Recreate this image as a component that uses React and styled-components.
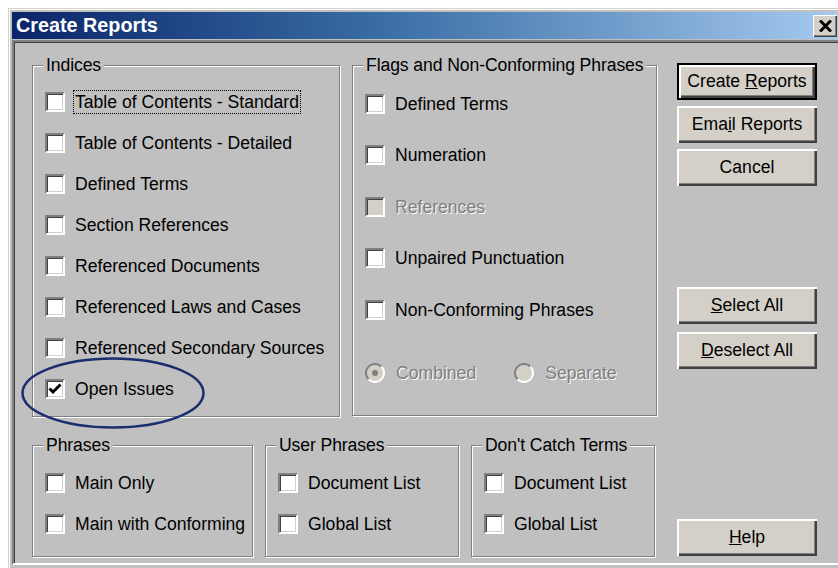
import styled, { createGlobalStyle } from 'styled-components'

const GlobalStyle = createGlobalStyle`
  html, body {
    margin: 0;
    padding: 0;
    background: #fff;
    overflow: hidden;
  }
  body {
    font-family: "Liberation Sans", Arial, sans-serif;
    color: #000;
  }
`

const Page = styled.div`
  position: relative;
  width: 838px;
  height: 568px;
  overflow: hidden;
`

const Frame = styled.div`
  margin: 8px 0 0 8px;
  width: 840px;
  height: 570px;
  box-sizing: border-box;
  background: #c0c0c0;
  border-top: 1px solid #d4d0c8;
  border-left: 1px solid #d4d0c8;
  box-shadow: inset 1px 1px 0 #fff;
  padding: 3px 0 0 3px;
`

const TitleBar = styled.div`
  width: 827px;
  height: 27px;
  box-sizing: border-box;
  padding: 0 2px 0 4px;
  display: flex;
  align-items: center;
  justify-content: space-between;
  background: linear-gradient(to right, #0a246a 0%, #3a6ea5 45%, #a6caf0 100%);
  color: #fff;
  font-weight: bold;
  font-size: 19.8px;
`

const CloseButton = styled.div`
  width: 24px;
  height: 22px;
  box-sizing: border-box;
  background: #d4d0c8;
  box-shadow: inset 1px 1px 0 #fff, inset -1px -1px 0 #404040, inset -2px -2px 0 #808080;
  display: flex;
  align-items: center;
  justify-content: center;
`

const Client = styled.div`
  margin-top: 1px;
  height: 525px;
  box-sizing: border-box;
  border-top: 2px solid #808080;
  border-left: 2px solid #808080;
  border-bottom: 2px solid #fff;
  box-shadow: inset 1px 1px 0 #404040;
  padding: 13px 0 0 18px;
  display: flex;
`

const LeftPane = styled.div`
  width: 625px;
  display: flex;
  flex-direction: column;
  gap: 18px;
`

const Row = styled.div`
  display: flex;
  gap: 12px;
`

const Group = styled.fieldset`
  margin: 0;
  min-width: 0;
  width: ${p => p.$width}px;
  height: ${p => p.$height}px;
  box-sizing: border-box;
  padding: ${p => p.$padTop}px 10px 0;
  border: 1px solid #808080;
  box-shadow: inset 1px 1px 0 #fff, 1px 1px 0 #fff;
`

const Legend = styled.legend`
  padding: 0 3px;
  font-size: 17.6px;
  line-height: 20px;
  letter-spacing: -0.1px;
  white-space: nowrap;
  background: #c0c0c0;
`

const Option = styled.div`
  display: flex;
  align-items: center;
  gap: 10px;
  height: ${p => p.$pitch}px;
  padding-left: 2px;
`

const Box = styled.span`
  flex: none;
  width: 20px;
  height: 20px;
  box-sizing: border-box;
  background: ${p => (p.$disabled ? '#d4d0c8' : '#fff')};
  border-top: 2px solid #808080;
  border-left: 2px solid #808080;
  border-right: 2px solid #fff;
  border-bottom: 2px solid #fff;
  box-shadow: inset 1px 1px 0 #404040, inset -1px -1px 0 #d4d0c8;
  display: flex;
  align-items: center;
  justify-content: center;
`

const Label = styled.span`
  font-size: 17.6px;
  line-height: 20px;
  white-space: nowrap;
  color: ${p => (p.$disabled ? '#808080' : '#000')};
  text-shadow: ${p => (p.$disabled ? '1px 1px 0 #fff' : 'none')};
  outline: ${p => (p.$focused ? '1px dotted #000' : 'none')};
  outline-offset: 1px;
`

const RadioRow = styled.div`
  display: flex;
  align-items: center;
  gap: 38px;
  margin-top: ${p => p.$offset}px;
  padding-left: 2px;
`

const RadioItem = styled.div`
  display: flex;
  align-items: center;
  gap: 11px;
`

const ButtonColumn = styled.div`
  margin-left: 20px;
  padding-top: 8px;
  width: 140px;
  display: flex;
  flex-direction: column;
`

const ButtonGroup = styled.div`
  display: flex;
  flex-direction: column;
  gap: ${p => p.$gap}px;
  margin-top: ${p => p.$offset}px;
`

const Button = styled.div`
  width: 140px;
  height: 37px;
  box-sizing: border-box;
  display: flex;
  align-items: center;
  justify-content: center;
  font-size: 17.6px;
  background: #d4d0c8;
  border: ${p => (p.$default ? '2px solid #000' : 'none')};
  box-shadow: inset 2px 2px 0 #fff, inset -2px -2px 0 #404040, inset -3px -3px 0 #808080;
`

const Annotation = styled.svg`
  position: absolute;
  left: 20px;
  top: 356px;
`

const indices = [
  { label: 'Table of Contents - Standard', focused: true },
  { label: 'Table of Contents - Detailed' },
  { label: 'Defined Terms' },
  { label: 'Section References' },
  { label: 'Referenced Documents' },
  { label: 'Referenced Laws and Cases' },
  { label: 'Referenced Secondary Sources' },
  { label: 'Open Issues', checked: true },
]

const flags = [
  { label: 'Defined Terms' },
  { label: 'Numeration' },
  { label: 'References', disabled: true },
  { label: 'Unpaired Punctuation' },
  { label: 'Non-Conforming Phrases' },
]

const Check = () => (
  <svg width="14" height="12" viewBox="0 0 14 12">
    <polyline points="1.5,5.5 5,9 12.5,1.5" fill="none" stroke="#000" strokeWidth="3" />
  </svg>
)

const CloseGlyph = () => (
  <svg width="13" height="12" viewBox="0 0 13 12">
    <path d="M1 0.5 L12 11.5 M12 0.5 L1 11.5" stroke="#000" strokeWidth="3" />
  </svg>
)

const Radio = ({ checked }) => (
  <svg width="20" height="20" viewBox="0 0 20 20">
    <circle cx="10" cy="10" r="8.5" fill="#d4d0c8" />
    <path d="M3.6 16.4 A9 9 0 0 1 16.4 3.6" fill="none" stroke="#808080" strokeWidth="2" />
    <path d="M16.4 3.6 A9 9 0 0 1 3.6 16.4" fill="none" stroke="#fff" strokeWidth="2" />
    {checked && <circle cx="10" cy="10" r="3" fill="#808080" />}
  </svg>
)

const CheckOption = ({ label, checked, disabled, focused, pitch }) => (
  <Option $pitch={pitch}>
    <Box $disabled={disabled}>{checked && <Check />}</Box>
    <Label $disabled={disabled} $focused={focused}>
      {label}
    </Label>
  </Option>
)

export default function App() {
  return (
    <Page>
      <GlobalStyle />
      <Frame>
        <TitleBar>
          <span>Create Reports</span>
          <CloseButton>
            <CloseGlyph />
          </CloseButton>
        </TitleBar>
        <Client>
          <LeftPane>
            <Row>
              <Group $width={308} $height={362} $padTop={6}>
                <Legend>Indices</Legend>
                {indices.map(item => (
                  <CheckOption key={item.label} pitch={41} {...item} />
                ))}
              </Group>
              <Group $width={305} $height={361} $padTop={3}>
                <Legend>Flags and Non-Conforming Phrases</Legend>
                {flags.map(item => (
                  <CheckOption key={item.label} pitch={51.5} {...item} />
                ))}
                <RadioRow $offset={27}>
                  <RadioItem>
                    <Radio checked />
                    <Label $disabled>Combined</Label>
                  </RadioItem>
                  <RadioItem>
                    <Radio />
                    <Label $disabled>Separate</Label>
                  </RadioItem>
                </RadioRow>
              </Group>
            </Row>
            <Row>
              <Group $width={221} $height={122} $padTop={7}>
                <Legend>Phrases</Legend>
                <CheckOption pitch={41} label='Main Only' />
                <CheckOption pitch={41} label='Main with Conforming' />
              </Group>
              <Group $width={194} $height={122} $padTop={7}>
                <Legend>User Phrases</Legend>
                <CheckOption pitch={41} label='Document List' />
                <CheckOption pitch={41} label='Global List' />
              </Group>
              <Group $width={184} $height={122} $padTop={7}>
                <Legend>Don't Catch Terms</Legend>
                <CheckOption pitch={41} label='Document List' />
                <CheckOption pitch={41} label='Global List' />
              </Group>
            </Row>
          </LeftPane>
          <ButtonColumn>
            <ButtonGroup $gap={6} $offset={0}>
              <Button $default>
                <span>Create <u>R</u>eports</span>
              </Button>
              <Button>
                <span>Ema<u>i</u>l Reports</span>
              </Button>
              <Button>Cancel</Button>
            </ButtonGroup>
            <ButtonGroup $gap={8} $offset={101}>
              <Button>
                <span><u>S</u>elect All</span>
              </Button>
              <Button>
                <span><u>D</u>eselect All</span>
              </Button>
            </ButtonGroup>
            <ButtonGroup $gap={0} $offset={150}>
              <Button>
                <span><u>H</u>elp</span>
              </Button>
            </ButtonGroup>
          </ButtonColumn>
        </Client>
      </Frame>
      <Annotation width="186" height="76" viewBox="0 0 186 76">
        <ellipse cx="93" cy="37" rx="90.5" ry="34.5" fill="none" stroke="#1a2d6d" strokeWidth="2.5" />
      </Annotation>
    </Page>
  )
}
